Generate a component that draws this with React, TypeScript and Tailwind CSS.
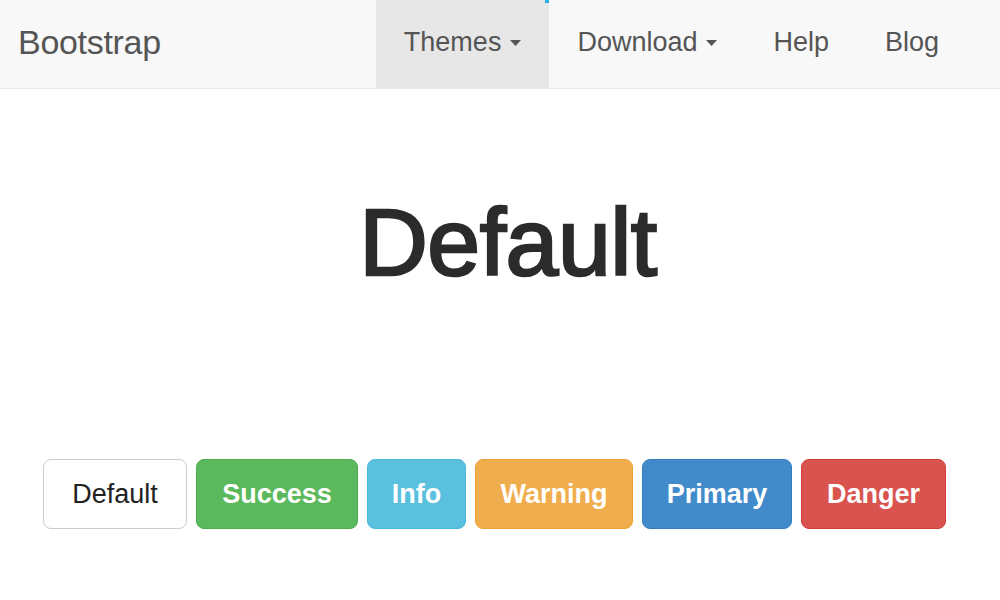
const navItems = [
  { name: 'Themes', caret: true, active: true },
  { name: 'Download', caret: true, active: false },
  { name: 'Help', caret: false, active: false },
  { name: 'Blog', caret: false, active: false },
];

const buttons = [
  { label: 'Default', className: 'w-[144px] bg-white border-[#cccccc] text-[#222222] font-normal' },
  { label: 'Success', className: 'w-[162px] bg-[#5cb85c] border-[#4cae4c] text-white font-bold' },
  { label: 'Info', className: 'w-[99px] bg-[#5bc0de] border-[#46b8da] text-white font-bold' },
  { label: 'Warning', className: 'w-[158px] bg-[#f0ad4e] border-[#eea236] text-white font-bold' },
  { label: 'Primary', className: 'w-[150px] bg-[#428bca] border-[#357ebd] text-white font-bold' },
  { label: 'Danger', className: 'w-[145px] bg-[#d9534f] border-[#d43f3a] text-white font-bold' },
];

function Caret() {
  return (
    <svg width="11" height="6" viewBox="0 0 11 6" className="ml-[9px] mt-[2px]">
      <path d="M0 0 L11 0 L5.5 6 Z" fill="#555555" />
    </svg>
  );
}

export default function App() {
  return (
    <div className="w-[1000px] h-[600px] bg-white overflow-hidden font-['Liberation_Sans',Arial,sans-serif]">
      {/* Navbar */}
      <nav className="h-[89px] bg-[#f8f8f8] border-b border-[#e7e7e7] flex items-stretch">
        <a href="#" className="pl-[18px] pb-[4px] flex items-center text-[34px] text-[#555555] tracking-[-0.3px]">
          Bootstrap
        </a>
        <ul className="ml-[215px] flex items-stretch">
          {navItems.map((item) => (
            <li
              key={item.name}
              className={`relative flex items-center px-[28px] pb-[4px] text-[27px] text-[#555555] ${
                item.active ? 'bg-[#e7e7e7]' : ''
              }`}
            >
              {item.name}
              {item.caret && <Caret />}
              {item.active && <span className="absolute right-0 top-0 w-[4px] h-[3px] bg-[#2ab0e6]" />}
            </li>
          ))}
        </ul>
      </nav>

      {/* Heading */}
      <h1
        className="mt-[106px] pl-[16px] text-center text-[95px] leading-none text-[#2b2b2b] tracking-[-0.5px] [-webkit-text-stroke-width:2.5px] [-webkit-text-stroke-color:#2b2b2b]"
      >
        Default
      </h1>

      {/* Buttons */}
      <div className="mt-[169px] pl-[43px] flex gap-[9px]">
        {buttons.map((b) => (
          <button
            key={b.label}
            className={`h-[70px] rounded-[8px] border text-[27px] flex items-center justify-center ${b.className}`}
          >
            {b.label}
          </button>
        ))}
      </div>
    </div>
  );
}
